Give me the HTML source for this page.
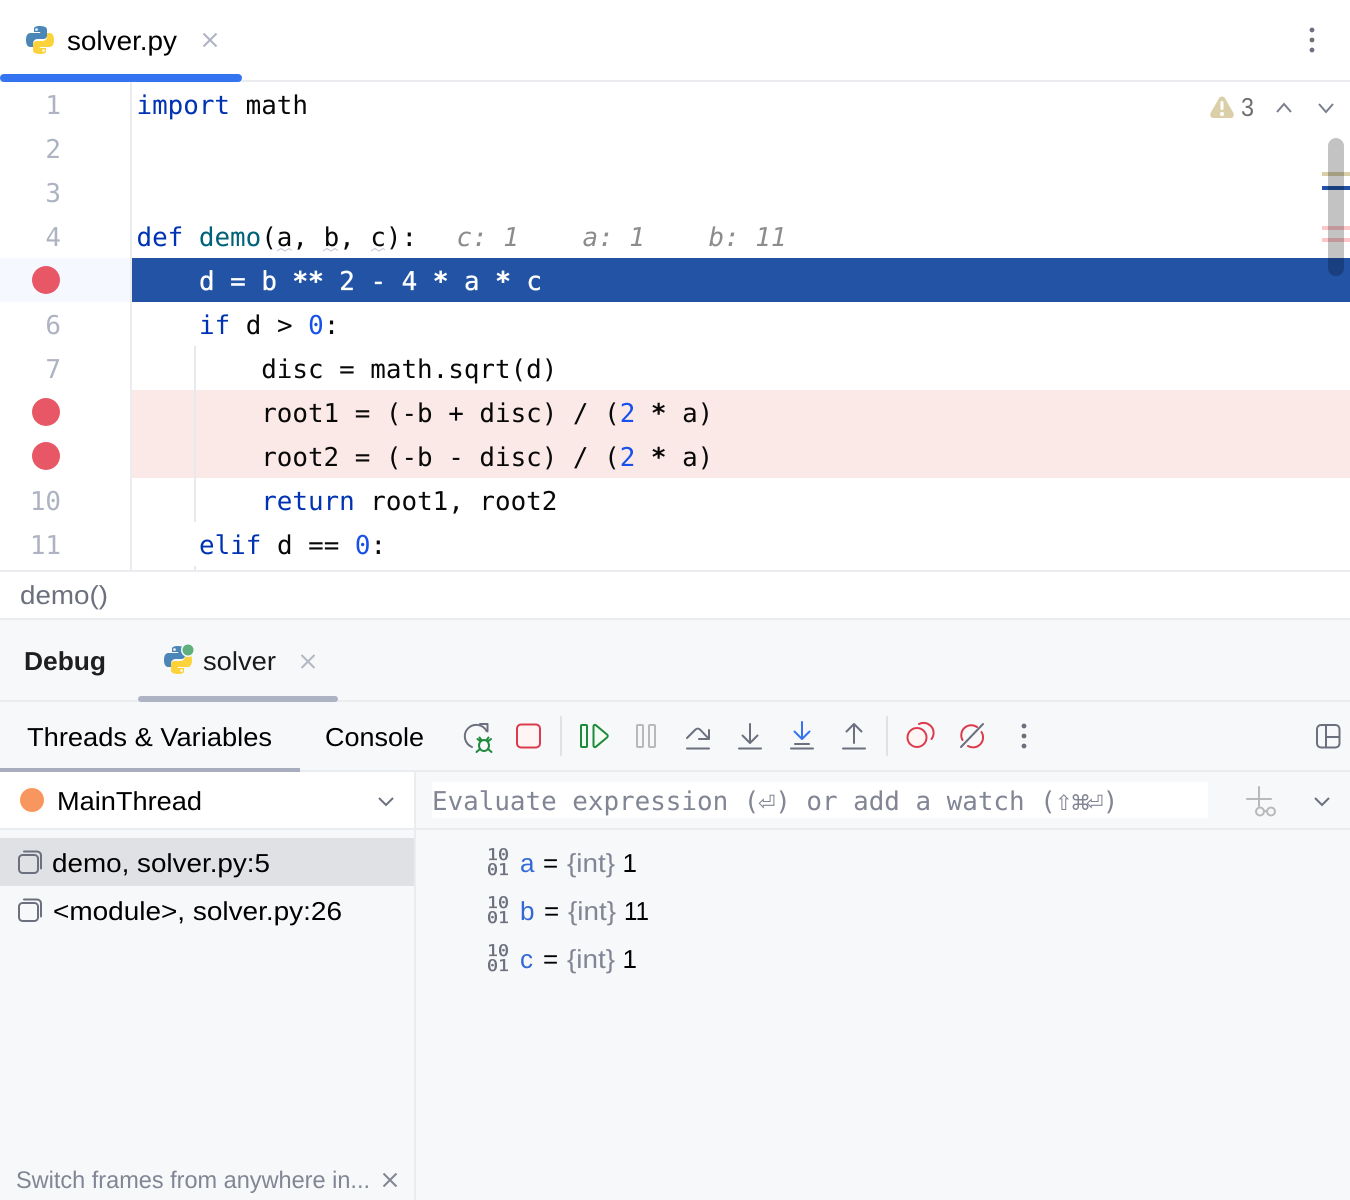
<!DOCTYPE html>
<html><head><meta charset="utf-8"><style>
html,body{margin:0;padding:0;background:#fff;width:1350px;height:1200px;overflow:hidden}
svg{display:block}
text{white-space:pre;text-rendering:geometricPrecision}
.m{font-family:"DejaVu Sans Mono","Liberation Mono",monospace;font-size:25.9px;fill:#080808}
.s{font-family:"Liberation Sans",sans-serif;font-size:26px;fill:#000}
.k{fill:#0033b3}.n{fill:#1750eb}.f{fill:#00627a}
.a{font-weight:bold}
.g{font-family:"DejaVu Sans Mono","Liberation Mono",monospace;font-size:25.9px;fill:#aeb3c2;text-anchor:end}
.h{font-family:"DejaVu Sans Mono","Liberation Mono",monospace;font-size:25.9px;font-style:italic;fill:#8c8c8c}
.b{font-family:"DejaVu Sans Mono",monospace;font-size:16px;fill:#6c707e;stroke:#6c707e;stroke-width:.35px}
.y{font-family:"DejaVu Sans",sans-serif;font-size:21px}
.i{fill:none;stroke:#6c707e;stroke-width:2;stroke-linecap:round;stroke-linejoin:round}
</style></head><body>
<svg width="1350" height="1200" viewBox="0 0 1350 1200" xmlns="http://www.w3.org/2000/svg">
<defs>
<g id="py">
<path fill="#4a86b8" d="M14 0C7.500 0 8 2.800 8 2.800V6h6.200v1H4.500C1.600 7 0 9.500 0 14s1.700 7 4.200 7H7v-3.500C7 15 9 13 11.500 13h6c2 0 3.500-1.600 3.500-3.500V3.500C21 1.500 18.500 0 14 0z"/>
<path fill="#fbd23a" d="M14 28c6.500 0 6-2.800 6-2.800V22h-6.200v-1h9.700c2.900 0 4.500-2.500 4.500-7s-1.700-7-4.200-7H21v3.500c0 2.500-2 4.500-4.500 4.500h-6C8.500 15 7 16.600 7 18.500v6C7 26.500 9.500 28 14 28z"/>
<circle cx="10.500" cy="3.500" r="1.300" fill="#fff"/><circle cx="17.500" cy="24.500" r="1.300" fill="#fff"/>
</g>
</defs>

<rect width="1350" height="1200" fill="#fff"/>

<!-- top tab -->
<use href="#py" x="26" y="26"/>
<text class="s" x="67" y="50" textLength="110" lengthAdjust="spacingAndGlyphs" style="font-size:27px">solver.py</text>
<path d="M203.500 33.500l13 13m0-13l-13 13" fill="none" stroke="#aeb3c2" stroke-width="2"/>
<circle cx="1312" cy="30" r="2.400" fill="#6c707e"/><circle cx="1312" cy="40" r="2.400" fill="#6c707e"/><circle cx="1312" cy="50" r="2.400" fill="#6c707e"/>
<rect y="80" width="1350" height="2" fill="#ebecf0"/>
<rect x="0" y="74" width="242" height="8" rx="4" fill="#3574f0"/>

<!-- gutter -->
<rect x="130" y="82" width="2" height="488" fill="#ebecf0"/>
<rect x="0" y="258" width="130" height="44" fill="#f5f8fe"/>
<rect x="132" y="258" width="1218" height="44" fill="#2253a5"/>
<rect x="132" y="390" width="1218" height="88" fill="#fae9e6"/>
<rect x="194" y="346" width="2" height="176" fill="#e8e9ec"/>
<rect x="194" y="566" width="2" height="4" fill="#e8e9ec"/>

<text class="g" x="61" y="114">1</text>
<text class="g" x="61" y="158">2</text>
<text class="g" x="61" y="202">3</text>
<text class="g" x="61" y="246">4</text>
<text class="g" x="61" y="334">6</text>
<text class="g" x="61" y="378">7</text>
<text class="g" x="61" y="510">10</text>
<text class="g" x="61" y="554">11</text>
<circle cx="46" cy="280" r="14" fill="#e85766"/>
<circle cx="46" cy="412" r="14" fill="#e85766"/>
<circle cx="46" cy="456" r="14" fill="#e85766"/>

<!-- code -->
<text class="m" x="136.500" y="114"><tspan class="k">import</tspan> math</text>
<text class="m" x="136.500" y="246"><tspan class="k">def</tspan> <tspan class="f">demo</tspan>(a, b, c):</text>
<path d="M277 251l4-2.500 4 2.500 4-2.500 3 2M323 251l4-2.500 4 2.500 4-2.500 3 2M371 251l4-2.500 4 2.500 4-2.500 2 1.500" fill="none" stroke="#c4c7d0" stroke-width="1"/>
<text class="h" x="456.500" y="246">c: 1</text>
<text class="h" x="582.500" y="246">a: 1</text>
<text class="h" x="708.500" y="246">b: 11</text>
<text class="m" x="199" y="290" style="fill:#fff;stroke:#fff;stroke-width:.3px">d = b <tspan class="a">**</tspan> 2 - 4 <tspan class="a">*</tspan> a <tspan class="a">*</tspan> c</text>
<text class="m" x="199" y="334"><tspan class="k">if</tspan> d &gt; <tspan class="n">0</tspan>:</text>
<text class="m" x="261.200" y="378">disc = math.sqrt(d)</text>
<text class="m" x="261.200" y="422">root1 = (-b + disc) / (<tspan class="n">2</tspan> <tspan class="a">*</tspan> a)</text>
<text class="m" x="261.200" y="466">root2 = (-b - disc) / (<tspan class="n">2</tspan> <tspan class="a">*</tspan> a)</text>
<text class="m" x="261.200" y="510"><tspan class="k">return</tspan> root1, root2</text>
<text class="m" x="199" y="554"><tspan class="k">elif</tspan> d == <tspan class="n">0</tspan>:</text>

<!-- inspections widget -->
<path d="M1222 96.500c1.500 0 2.500.8 3.300 2.200l8 14c1.200 2.200.2 5.300-2.800 5.300h-17c-3 0-4-3.100-2.800-5.300l8-14c.8-1.400 1.800-2.200 3.300-2.200z" fill="#dbcfa9"/>
<rect x="1220.500" y="101" width="3" height="9" rx="1.500" fill="#fff"/><circle cx="1222" cy="114" r="2" fill="#fff"/>
<text class="s" x="1241" y="116" textLength="13" lengthAdjust="spacingAndGlyphs" style="fill:#6e6e6e">3</text>
<path d="M1277 112l7-8 7 8" fill="none" stroke="#7a7e8e" stroke-width="2"/>
<path d="M1319 104l7 8 7-8" fill="none" stroke="#7a7e8e" stroke-width="2"/>

<!-- scrollbar + markers -->
<rect x="1322" y="172" width="28" height="4" fill="#d9cfa9"/>
<rect x="1322" y="186" width="28" height="4" fill="#2253a5"/>
<rect x="1322" y="226" width="28" height="4" fill="#fdc6c9"/>
<rect x="1322" y="238" width="28" height="4" fill="#fdc6c9"/>
<rect x="1328" y="138" width="16" height="138" rx="8" fill="#000" fill-opacity=".235"/>

<!-- breadcrumb -->
<rect y="570" width="1350" height="2" fill="#ebecf0"/>
<text class="s" x="20" y="604" textLength="88" lengthAdjust="spacingAndGlyphs" style="fill:#6c707e">demo()</text>

<!-- tool window -->
<rect y="618" width="1350" height="582" fill="#f7f8fa"/>
<rect y="618" width="1350" height="2" fill="#ebecf0"/>
<text class="s" x="24" y="670" textLength="82" lengthAdjust="spacingAndGlyphs" font-weight="bold" style="fill:#1f1f1f">Debug</text>
<use href="#py" x="164" y="646"/>
<circle cx="188" cy="650" r="7" fill="#f7f8fa"/><circle cx="188" cy="650" r="5.500" fill="#5fb07c"/>
<text class="s" x="203" y="670" textLength="73" lengthAdjust="spacingAndGlyphs" style="fill:#1a1a1a">solver</text>
<path d="M301.500 655l13 13m0-13l-13 13" fill="none" stroke="#b4b8c6" stroke-width="2"/>
<rect y="700" width="1350" height="2" fill="#ebecf0"/>
<rect x="138" y="696" width="200" height="6" rx="3" fill="#aeb3c4"/>

<text class="s" x="27" y="746" textLength="245" lengthAdjust="spacingAndGlyphs">Threads &amp; Variables</text>
<text class="s" x="325" y="746" textLength="99" lengthAdjust="spacingAndGlyphs">Console</text>

<!-- toolbar icons -->
<g fill="none" stroke-width="2" stroke-linecap="round" stroke-linejoin="round">
<path d="M472 747A11.500 11.500 0 1 1 486.500 731" stroke="#6c707e"/>
<path d="M480 724h7.500v7.500" stroke="#6c707e"/>
<g stroke="#208a3c">
<ellipse cx="484" cy="745.500" rx="5" ry="5.500"/>
<path d="M481 739.500l-1.500-2m7.500 2l1.500-2M477.500 739l2.500 2m11-2l-2.500 2M476.500 752l3.500-3m11.500 3l-3.500-3"/>
</g>
<rect x="517" y="724.500" width="23" height="23" rx="4" stroke="#db3b4b" fill="#fff5f5"/>
<rect x="581" y="725" width="6" height="22" rx="1" stroke="#208a3c" fill="#f2fcf3"/>
<path d="M593.500 726.500c0-1.500 1.500-2 2.500-1.200l11 9.200c1 .9 1 2.100 0 3l-11 9.200c-1 .8-2.500.3-2.500-1.200z" stroke="#208a3c" fill="#f2fcf3"/>
<rect x="637" y="725" width="6" height="22" rx="1" stroke="#b9b9b9"/>
<rect x="649" y="725" width="6" height="22" rx="1" stroke="#b9b9b9"/>
</g>
<g class="i" fill="none">
<path d="M687 748.500h22"/>
<path d="M687 738l8-8c2-2 3.500-2 5.500 0l8 8.500"/><path d="M709 730v9h-10"/>
<path d="M739 748.500h22"/><path d="M750 724v19M742.500 735.500l7.500 7.500 7.500-7.500"/>
<path d="M843 748.500h22"/><path d="M854 743v-19M846.500 731.500l7.500-7.500 7.500 7.500"/>
</g>
<g fill="none" stroke="#3574f0" stroke-width="2" stroke-linecap="round" stroke-linejoin="round">
<path d="M802 722v17M794.500 731.500l7.500 7.500 7.500-7.500"/>
<path d="M795 744h14" stroke="#6c707e"/><path d="M791 748.500h22" stroke="#6c707e"/>
</g>
<rect x="560" y="716" width="2" height="40" fill="#dfe1e5"/>
<rect x="886" y="716" width="2" height="40" fill="#dfe1e5"/>

<!-- breakpoints -->
<g fill="none" stroke="#db3b4b" stroke-width="2" stroke-linecap="round">
<circle cx="917" cy="737.500" r="9.500" fill="#fff5f5"/>
<path d="M919 724A10 10 0 0 1 931.500 739"/>
<path d="M962.500 740A10 10 0 0 1 977 727"/><path d="M981.500 732A10 10 0 0 1 968 746"/>
</g>
<path d="M961 747l22-23" stroke="#6c707e" stroke-width="2" stroke-linecap="round"/>
<circle cx="1024" cy="726" r="2.400" fill="#6c707e"/><circle cx="1024" cy="736" r="2.400" fill="#6c707e"/><circle cx="1024" cy="746" r="2.400" fill="#6c707e"/>
<g class="i"><rect x="1317" y="725" width="22.500" height="22.500" rx="4"/><path d="M1326 725v22.500M1326 737h13.500"/></g>

<!-- third row -->
<rect y="772" width="414" height="56" fill="#fff"/>
<rect y="770" width="1350" height="2" fill="#ebecf0"/>
<rect x="0" y="768" width="300" height="4" fill="#a8adbd"/>
<rect y="828" width="1350" height="2" fill="#ebecf0"/>
<rect x="414" y="772" width="2" height="428" fill="#ebecf0"/>
<circle cx="32" cy="800" r="12" fill="#f7975f"/>
<text class="s" x="57" y="810" textLength="145" lengthAdjust="spacingAndGlyphs">MainThread</text>
<path d="M379 798l7 7 7-7" fill="none" stroke="#6c707e" stroke-width="2"/>

<rect x="432" y="782" width="776" height="36" fill="#fff"/>
<text class="m" x="432" y="810" style="fill:#818594">Evaluate expression (<tspan class="y" x="758">⏎</tspan><tspan x="775.200">) or add a watch (</tspan><tspan class="y" x="1055">⇧</tspan><tspan class="y" x="1070">⌘</tspan><tspan class="y" x="1086">⏎</tspan><tspan x="1102.800">)</tspan></text>
<g fill="none" stroke="#b9b9b9" stroke-width="2" stroke-linecap="round">
<path d="M1247 799h24M1259 787v19"/><circle cx="1260" cy="811.500" r="4"/><circle cx="1271" cy="811.500" r="4"/><path d="M1264 811h3"/>
</g>
<path d="M1315 798l7 7 7-7" fill="none" stroke="#6c707e" stroke-width="2"/>

<!-- frames -->
<rect x="0" y="838" width="414" height="48" fill="#dfe1e5"/>
<g class="i">
<rect x="19" y="855" width="19" height="18" rx="3.500"/><path d="M24 851.500h13c2 0 4 1.500 4 4v13"/>
<rect x="19" y="903" width="19" height="18" rx="3.500"/><path d="M24 899.500h13c2 0 4 1.500 4 4v13"/>
</g>
<text class="s" x="52" y="872" textLength="218" lengthAdjust="spacingAndGlyphs">demo, solver.py:5</text>
<text class="s" x="53" y="920" textLength="289" lengthAdjust="spacingAndGlyphs">&lt;module&gt;, solver.py:26</text>

<!-- variables -->
<text class="b" x="487" y="860" textLength="22" lengthAdjust="spacingAndGlyphs">10</text><text class="b" x="487" y="875" textLength="22" lengthAdjust="spacingAndGlyphs">01</text>
<text class="b" x="487" y="908" textLength="22" lengthAdjust="spacingAndGlyphs">10</text><text class="b" x="487" y="923" textLength="22" lengthAdjust="spacingAndGlyphs">01</text>
<text class="b" x="487" y="956" textLength="22" lengthAdjust="spacingAndGlyphs">10</text><text class="b" x="487" y="971" textLength="22" lengthAdjust="spacingAndGlyphs">01</text>

<text class="s" x="520" y="872" style="fill:#3369d6">a</text>
<text class="s" x="543" y="872">=</text>
<text class="s" x="567" y="872" textLength="48" lengthAdjust="spacingAndGlyphs" style="fill:#818594">{int}</text>
<text class="s" x="622.500" y="872">1</text>

<text class="s" x="520" y="920" style="fill:#3369d6">b</text>
<text class="s" x="544" y="920">=</text>
<text class="s" x="568" y="920" textLength="48" lengthAdjust="spacingAndGlyphs" style="fill:#818594">{int}</text>
<text class="s" x="624" y="920" textLength="25" lengthAdjust="spacingAndGlyphs">11</text>

<text class="s" x="520" y="968" style="fill:#3369d6">c</text>
<text class="s" x="543" y="968">=</text>
<text class="s" x="567" y="968" textLength="48" lengthAdjust="spacingAndGlyphs" style="fill:#818594">{int}</text>
<text class="s" x="622.500" y="968">1</text>

<!-- footer -->
<text class="s" x="16" y="1188" textLength="354" lengthAdjust="spacingAndGlyphs" style="fill:#818594;font-size:24px">Switch frames from anywhere in...</text>
<path d="M383.500 1173.500l13 13m0-13l-13 13" fill="none" stroke="#818594" stroke-width="2"/>
</svg>
</body></html>
